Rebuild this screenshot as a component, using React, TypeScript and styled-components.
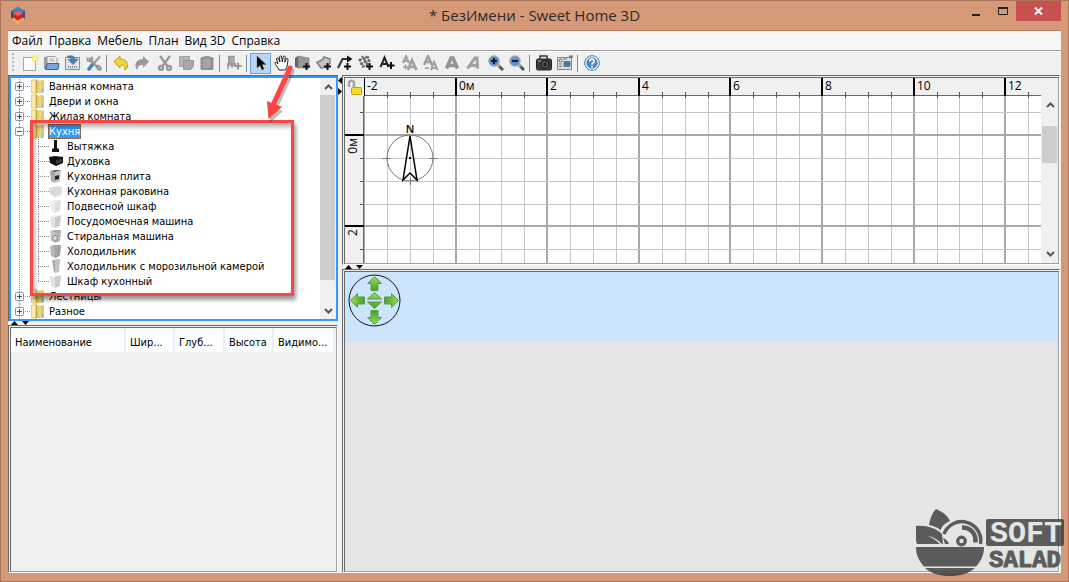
import React, { useLayoutEffect, useRef, useState } from 'react';
import styled, { createGlobalStyle } from 'styled-components';

const GlobalStyle = createGlobalStyle`
  *, *::before, *::after { box-sizing: border-box; }
  body { margin: 0; font-family: 'Open Sans', sans-serif; font-size: 12px; color: #000; }
  button { font: inherit; color: inherit; padding: 0; border: 0; background: none; }
  ul { list-style: none; margin: 0; padding: 0; }
`;

const LIST_FONT = "'DejaVu Sans Condensed', 'DejaVu Sans', sans-serif";

const dots = (dir: string) =>
  `repeating-linear-gradient(${dir}, #909090 0 1px, transparent 1px 2px)`;

/* ---------- window frame ---------- */

const Window = styled.div`
  position: relative;
  min-height: 100vh;
  display: flex;
  flex-direction: column;
  padding: 0 7px 8px;
  border: 1px solid #a8745a;
  background: #d69977;
  overflow: hidden;
`;

const TitleBar = styled.header`
  display: grid;
  grid-template-columns: 130px 1fr 130px;
  height: 29px;
`;

const AppIcon = styled.svg`
  margin: 6px 2px;
`;

const Title = styled.h1`
  margin: 0;
  font-size: 15px;
  line-height: 29px;
  font-weight: 400;
  text-align: center;
  color: #2b2b2b;
`;

const WindowButtons = styled.div`
  display: flex;
  justify-content: flex-end;
  align-items: flex-start;
`;

const WindowButton = styled.button<{ $close?: boolean }>`
  width: ${p => (p.$close ? 45 : 27)}px;
  height: 20px;
  background: ${p => (p.$close ? '#c75050' : 'transparent')};
  svg { display: block; margin: 0 auto; }
`;

const Client = styled.div`
  flex: 1;
  display: flex;
  flex-direction: column;
  border-top: 1px solid #b57f60;
  background: #f0f0f0;
`;

const MenuBar = styled.nav`
  display: flex;
  gap: 6px;
  height: 20px;
  padding-left: 4px;
  background: #f6f6f6;
  border-bottom: 1px solid #a0a0a0;
`;

const MenuItem = styled.button`
  line-height: 19px;
  white-space: nowrap;
`;

/* ---------- toolbar ---------- */

const Toolbar = styled.div`
  display: flex;
  align-items: center;
  height: 24px;
  padding: 0 0 1px 4px;
  border-top: 1px solid #fff;
`;

const Grip = styled.span`
  width: 2px;
  height: 20px;
  margin-right: 6px;
  background: repeating-linear-gradient(#b8b8b8 0 2px, transparent 2px 4px);
`;

const Group = styled.div`
  display: flex;
  & + & { margin-left: 2px; }
`;

const Separator = styled.span`
  width: 1px;
  height: 17px;
  margin: 0 3px 0 2px;
  background: #8a8a8a;
`;

const ToolButton = styled.button<{ $active?: boolean }>`
  display: grid;
  place-items: center;
  width: 21px;
  height: 21px;
  border: 1px solid ${p => (p.$active ? '#6ba6dc' : 'transparent')};
  background: ${p => (p.$active ? '#b9d7f3' : 'transparent')};
`;

/* ---------- panes ---------- */

const Main = styled.main`
  flex: 1;
  display: flex;
  padding-right: 1px;
`;

const Column = styled.div<{ $side?: boolean }>`
  display: flex;
  flex-direction: column;
  min-width: 0;
  flex: ${p => (p.$side ? '0 0 330px' : '1 1 0')};
`;

const Splitter = styled.div<{ $vertical?: boolean }>`
  flex: 0 0 4px;
  line-height: 0;
  overflow: hidden;
  padding: ${p => (p.$vertical ? '2px 0' : '0 3px')};
`;

const Pane = styled.section<{ $grow: number }>`
  flex: ${p => p.$grow} 1 0;
  min-height: 0;
  display: flex;
  padding: 1px 0 0 1px;
  border: 1px solid;
  border-color: #696969 #fff #fff #696969;
`;

const PaneBody = styled.div`
  flex: 1;
  min-width: 0;
  border: 1px solid;
  border-color: #696969 #a0a0a0 #a0a0a0 #696969;
`;

const TreePane = styled.section`
  flex: 247 1 0;
  min-height: 0;
  display: flex;
  border: 1px solid #696969;
  border-width: 1px 0 0 1px;
`;

const TreeFrame = styled.div`
  flex: 1;
  min-width: 0;
  display: flex;
  border: 2px solid #3399ff;
  background: #fff;
`;

const Tree = styled.ul`
  flex: 1;
  min-width: 0;
  padding: 1px 0 0 4px;
  overflow: hidden;
  font-family: ${LIST_FONT};
  font-size: 11px;
  line-height: 15px;
`;

const CategoryRow = styled.div`
  display: flex;
  align-items: center;
  height: 15px;
  background: ${dots('to bottom')} 4px 0 / 1px 15px no-repeat,
    ${dots('to right')} 8px 7px / 9px 1px no-repeat;
`;

const Toggle = styled.button`
  width: 9px;
  height: 9px;
  margin-right: 7px;
  svg { display: block; }
`;

const Folder = styled.svg`
  flex: none;
  margin-right: 4px;
`;

const Label = styled.span<{ $selected?: boolean }>`
  height: 15px;
  padding: 0 1px;
  white-space: nowrap;
  color: ${p => (p.$selected ? '#fff' : '#000')};
  background: ${p => (p.$selected ? '#3399ff' : 'transparent')};
  outline: ${p => (p.$selected ? '1px dotted #7a5a3a' : 'none')};
  outline-offset: -1px;
`;

const Items = styled.ul`
  background: ${dots('to bottom')} 4px 0 / 1px 100% no-repeat;
`;

const ItemRow = styled.li<{ $last?: boolean }>`
  display: flex;
  align-items: center;
  height: 15px;
  padding-left: 34px;
  background: ${dots('to bottom')} 23px 0 / 1px ${p => (p.$last ? 8 : 15)}px no-repeat,
    ${dots('to right')} 23px 7px / 11px 1px no-repeat;
  svg { flex: none; margin-right: 3px; }
`;

const ScrollBar = styled.div`
  display: flex;
  flex-direction: column;
  width: 16px;
  background: #f0f0f0;
`;

const ScrollArrow = styled.button`
  display: grid;
  place-items: center;
  height: 17px;
  flex: none;
`;

const ScrollTrack = styled.div`
  flex: 1;
  display: flex;
  flex-direction: column;
`;

const Thumb = styled.div<{ $size: number }>`
  flex: ${p => p.$size} 1 0;
  background: #cdcdcd;
  margin-right: 1px;
`;

const Spacer = styled.div<{ $grow: number }>`
  flex: ${p => p.$grow} 1 0;
`;

const FurnitureTable = styled.table`
  width: calc(100% - 1px);
  table-layout: fixed;
  border-collapse: separate;
  border-spacing: 0;
  font-family: ${LIST_FONT};
  font-size: 11px;
  background: #fcfdff;
`;

const HeadCell = styled.th<{ $width?: number }>`
  width: ${p => (p.$width ? `${p.$width}px` : 'auto')};
  height: 24px;
  padding: 4px 0 0 4px;
  font-weight: 400;
  text-align: left;
  white-space: nowrap;
  border-right: 2px solid #e9eff8;
`;

/* ---------- plan ---------- */

const PlanGrid = styled.div`
  display: grid;
  grid-template-columns: 19px 1fr 17px;
  grid-template-rows: 18px 1fr;
  height: 100%;
`;

const Corner = styled.button`
  display: grid;
  place-items: center;
`;

const ClipCell = styled.div<{ $paper?: boolean }>`
  display: grid;
  min-width: 0;
  min-height: 0;
  overflow: hidden;
  background: ${p => (p.$paper ? '#fff' : '#f0f0f0')};
  svg { display: block; width: 100%; height: 0; min-height: 100%; }
`;

const PlanScroll = styled.div`
  display: flex;
  justify-content: flex-end;
  background: #f0f0f0;
`;

const View3D = styled.div`
  height: 100%;
  padding: 2px 3px;
  background: linear-gradient(#cce4fc 70px, #e5e5e5 70px);
`;

/* ---------- overlays ---------- */

const Callout = styled.div`
  position: absolute;
  left: 29px;
  top: 119px;
  width: 264px;
  height: 176px;
  border: 3px solid #fb4646;
  box-shadow: 2px 4px 4px rgba(0, 0, 0, 0.4), inset 2px 4px 4px rgba(0, 0, 0, 0.3);
  pointer-events: none;
`;

const CalloutArrow = styled.svg`
  position: absolute;
  left: 259px;
  top: 59px;
  pointer-events: none;
`;

const Watermark = styled.svg`
  position: absolute;
  right: 0;
  bottom: 4px;
  pointer-events: none;
`;

/* ---------- icons ---------- */

const Plus = ({ c = '#111', x = 11.5, y = 11.5 }: { c?: string; x?: number; y?: number }) => (
  <path d={`M${x - 3.5} ${y}h7M${x} ${y - 3.5}v7`} stroke={c} strokeWidth="2" fill="none" />
);

const Lens = ({ plus }: { plus?: boolean }) => (
  <>
    <path d="M10 10l5 5" stroke="#555" strokeWidth="3" />
    <path d="M9.5 9.5l2 2" stroke="#bbb" strokeWidth="2" />
    <circle cx="6" cy="6" r="5" fill="#5b8fd0" stroke="#9aa3ad" strokeWidth="1.5" />
    <path d={plus ? 'M3 6h6M6 3v6' : 'M3 6h6'} stroke="#0a1f4a" strokeWidth="2" />
  </>
);

const icons: Record<string, React.ReactNode> = {
  new: (
    <>
      <path d="M.5 2.5h12v13H.5z" fill="#fcfcfc" stroke="#a5a5a5" />
      <circle cx="12" cy="3.5" r="3.500" fill="#f8ea5a" opacity=".8" />
      <circle cx="12" cy="3.5" r="1.500" fill="#fffbd0" />
    </>
  ),
  open: (
    <>
      <path d="M0 2h6l1 2v10H0z" fill="#9a9a9a" />
      <path d="M3 1.500h8l2 2V10H3z" fill="#f5f5f5" stroke="#999" />
      <path d="M5 4h5M5 6h6" stroke="#aaa" />
      <path d="M3.500 8.500h11.500l-1 6H1.500z" fill="#7ba5d8" stroke="#3465a4" />
    </>
  ),
  save: (
    <>
      <path d="M.5 2.500h14v12H.5z" fill="#e4e4e4" stroke="#8a8a8a" />
      <path d="M3 12h10" stroke="#8a8a8a" strokeWidth="2" strokeDasharray="1 1" />
      <path d="M2 1.500c5-2 8 0 8 3h3l-5 5-5-5h3c0-2-1-2-4-3z" fill="#4a82bd" stroke="#2d5f99" strokeWidth=".6" />
    </>
  ),
  prefs: (
    <>
      <path d="M3 3l9 10" stroke="#999" strokeWidth="2.5" />
      <path d="M1.500 2.500v3l3 1 2-2-1-3" fill="none" stroke="#999" strokeWidth="1.800" />
      <path d="M10 12l2 3h3v-3l-3-2z" fill="#aaa" stroke="#888" />
      <path d="M14 1.500L8 8" stroke="#999" strokeWidth="2" />
      <path d="M6 10l-3 4" stroke="#4f7fb8" strokeWidth="3.600" strokeLinecap="round" />
    </>
  ),
  undo: <path d="M1 6.500L7 1v3c5 0 8 3 7.500 7 0 2-1 3-3 4 1-3 0-5-4.500-5v3z" fill="#f4d43c" stroke="#c3a014" />,
  redo: <path d="M15 6.500L9 1v3C4 4 1 7 1.500 11c0 2 1 3 2 4 0-3 1-5 5.500-5v3z" fill="#9a9a9a" />,
  cut: (
    <g fill="none" stroke="#999" strokeWidth="2.400">
      <path d="M3 1l7.500 10M13 1L5.500 11" />
      <circle cx="4" cy="13" r="2" />
      <circle cx="12" cy="13" r="2" />
    </g>
  ),
  copy: (
    <>
      <path d="M1.500 1.500h10v10h-10z" fill="#b5b5b5" stroke="#a2a2a2" />
      <path d="M5.500 5.500h10v6l-3 3h-7z" fill="#a9a9a9" stroke="#979797" />
    </>
  ),
  paste: (
    <>
      <rect x="1.500" y="2" width="13" height="13" rx="1.500" fill="#909090" />
      <path d="M4 4h8v7l-2 2H4z" fill="#a4a4a4" />
      <path d="M5 1h6v3H5z" fill="#999" />
    </>
  ),
  addFurniture: (
    <>
      <path d="M2 1h5v7H2zM1 8h9v3H1z" fill="#a8a8a8" />
      <path d="M3 8V1.500h5V8M2 14.500V9h7v3M6 13V9" fill="none" stroke="#989898" strokeWidth="1.500" />
      <Plus c="#979797" x={12} y={11} />
    </>
  ),
  select: <path d="M4 1v12l3-2.500 2 4.500 2-1-2-4.500h4z" fill="#000" stroke="#666" strokeWidth=".5" />,
  pan: (
    <path
      d="M5 15c-1-3-4-5-4-7 0-1 2-1 3 1L2.500 4c0-1.500 2-1.500 2.200 0L5.800 7 5.600 2c0-1.500 2-1.500 2.100 0L8.300 7 9.200 2c.3-1.400 2-1.200 2 .2L10.800 7.300 12.200 4c.5-1.200 2-.8 1.800.5C13.500 8 13.500 12 11.500 15z"
      fill="#fff"
      stroke="#222"
    />
  ),
  wall: (
    <>
      <path d="M0 3l3-2v12l-3-1z" fill="#666" />
      <path d="M3 1l11 2v10L3 13z" fill="#989898" stroke="#777" strokeWidth=".6" />
      <Plus />
    </>
  ),
  room: (
    <>
      <path d="M1 7.500L6 5l2-3 6 2v4l-3 4-6 1z" fill="#c5c5c5" stroke="#808080" strokeWidth="1.500" />
      <Plus />
    </>
  ),
  polyline: (
    <>
      <path d="M1 13L5.500 4H12" fill="none" stroke="#333" strokeWidth="2" />
      <path d="M10 .5L15.500 4 10 7.500z" fill="#111" />
      <Plus x={10.500} />
    </>
  ),
  dimension: (
    <>
      <path d="M1 5l10-3M2 9l10-4M4 12l7-3M4 1l6 9M1 4l5 8M8 1l4 6" stroke="#666" strokeWidth="2" strokeDasharray="3 1" />
      <Plus />
    </>
  ),
  text: (
    <>
      <path d="M1.500 12L5.500 2.500 9.500 12M3 9h5" fill="none" stroke="#222" strokeWidth="2" />
      <Plus x={12} y={10.500} />
    </>
  ),
  bigger: (
    <g fill="none" stroke="#a0a0a0">
      <path d="M1 8l3-7 3 7M2 6h4" strokeWidth="2" />
      <path d="M6 15l4-10 4.500 10M7.500 12h5.500" strokeWidth="2.600" />
      <path d="M1 12h5M3.500 9.500v5" strokeWidth="1.600" />
    </g>
  ),
  smaller: (
    <g fill="none" stroke="#a0a0a0">
      <path d="M1 10l4-9 4 9M2.500 7H8" strokeWidth="2.600" />
      <path d="M8 15l3-8 3.500 8M9 13h4.500" strokeWidth="2" />
      <path d="M2 13h4" strokeWidth="1.600" />
    </g>
  ),
  bold: <path d="M2.500 13.500L7 3h2l4.500 10.500M4 10.500h8" fill="none" stroke="#959595" strokeWidth="3.600" />,
  italic: <path d="M2.500 13.500L10 3h2l.5 10.500M5 10.500h8" fill="none" stroke="#a0a0a0" strokeWidth="3" />,
  zoomIn: <Lens plus />,
  zoomOut: <Lens />,
  photo: (
    <>
      <path d="M4 4.500V1h7v3.500" fill="none" stroke="#333" strokeWidth="1.500" />
      <rect x=".5" y="4" width="15" height="11" rx="1.500" fill="#3d3d3d" stroke="#222" />
      <circle cx="9" cy="9.500" r="3.800" fill="#666" stroke="#111" />
      <circle cx="9" cy="9.500" r="2" fill="#222" />
      <path d="M2 6h3" stroke="#aaa" />
    </>
  ),
  video: (
    <>
      <path d="M.5 2.500h14v12H.5z" fill="#dedede" stroke="#858585" />
      <circle cx="3.500" cy="5.500" r="1.500" fill="#fff" stroke="#555" />
      <path d="M2 9h3M2 11.500h3M6 4h4" stroke="#777" />
      <path d="M7 6.500h6v5H7z" fill="#3f78bd" stroke="#777" />
      <path d="M12 1.500h4" stroke="#777" strokeWidth="2" />
    </>
  ),
  help: (
    <>
      <circle cx="8" cy="8" r="7.300" fill="#fff" stroke="#3f72b5" />
      <circle cx="8" cy="8" r="5.700" fill="#4f86c8" />
      <path d="M5.800 6.500c0-3 4.400-3 4.400-.5C10.200 7.800 8 7.500 8 9.800M8 11v1.500" fill="none" stroke="#fff" strokeWidth="1.700" />
    </>
  ),
};

const Tool = ({ name, label, active }: { name: string; label: string; active?: boolean }) => (
  <ToolButton $active={active} aria-label={label}>
    <svg width="16" height="16" viewBox="0 0 16 16">{icons[name]}</svg>
  </ToolButton>
);

type ToolDef = [string, string];
const toolGroups: (ToolDef[] | null)[] = [
  [['new', 'Новый'], ['open', 'Открыть'], ['save', 'Сохранить'], ['prefs', 'Настройки']],
  null,
  [['undo', 'Отменить'], ['redo', 'Повторить']],
  [['cut', 'Вырезать'], ['copy', 'Копировать'], ['paste', 'Вставить']],
  null,
  [['addFurniture', 'Добавить мебель']],
  null,
  [
    ['select', 'Выбор'], ['pan', 'Перемещение'], ['wall', 'Стены'], ['room', 'Комнаты'],
    ['polyline', 'Ломаная'], ['dimension', 'Размеры'], ['text', 'Текст'],
  ],
  [['bigger', 'Крупнее'], ['smaller', 'Мельче'], ['bold', 'Жирный'], ['italic', 'Курсив']],
  [['zoomIn', 'Приблизить'], ['zoomOut', 'Отдалить']],
  null,
  [['photo', 'Фото'], ['video', 'Видео']],
  null,
  [['help', 'Справка']],
];

const FolderIcon = () => (
  <Folder width="13" height="15" viewBox="0 0 13 15">
    <path d="M0 1l4-1 3 1v13l-3 1-4-1z" fill="#e9d272" />
    <path d="M1 2l3-1v13l-3-1z" fill="#f8ebad" />
    <path d="M6 2l6-1 1 1v11l-1 1H6z" fill="#e3cb66" />
    <path d="M8 3l2-1v11H8z" fill="#ecd98a" />
    <path d="M5.500 1v13" stroke="#c5a845" />
    <path d="M11.500 10v4" stroke="#7fb4dc" />
  </Folder>
);

const Box = ({ front, side, top, narrow }: { front: string; side: string; top: string; narrow?: boolean }) =>
  narrow ? (
    <>
      <path d="M4 1h7l-1 12-4 1z" fill={front} />
      <path d="M3 1l3 1v12l-1-1z" fill={side} />
      <path d="M3 1l7-1 1 1-5 1z" fill={top} />
    </>
  ) : (
    <>
      <path d="M1 2l5 1v11l-4-2z" fill={side} />
      <path d="M6 3l6-2-1 11-5 2z" fill={front} />
      <path d="M1 2l6-1 5 0-6 2z" fill={top} />
    </>
  );

const light = { front: '#cbcbcb', side: '#e2e2e2', top: '#f0f0f0' };

const items: [string, React.ReactNode][] = [
  ['Вытяжка', <path d="M5 1h3v8l2 1v3H3v-3l2-1z" fill="#151515" />],
  [
    'Духовка',
    <>
      <path d="M0 3l6-1 8 1v6l-7 3-6-3z" fill="#111" />
      <path d="M7 6l6-1v3l-6 2z" fill="#3c3c3c" />
    </>,
  ],
  [
    'Кухонная плита',
    <>
      <Box front="#c4c4c4" side="#aaa" top="#555" />
      <path d="M6 7l4-1v4l-4 1z" fill="#222" />
    </>,
  ],
  ['Кухонная раковина', <path d="M0 4l8-2 5 1v7l-7 3-5-3z" fill="#d9d9d9" stroke="#ececec" />],
  ['Подвесной шкаф', <Box front="#dedede" side="#ededed" top="#ededed" />],
  ['Посудомоечная машина', <Box {...light} />],
  [
    'Стиральная машина',
    <>
      <Box front="#b4b4b4" side="#c8c8c8" top="#999" />
      <circle cx="6" cy="9" r="2.500" fill="#ddd" stroke="#888" />
    </>,
  ],
  ['Холодильник', <Box front="#a0a0a0" side="#b8b8b8" top="#999" />],
  ['Холодильник с морозильной камерой', <Box narrow front="#c4c4c4" side="#aaa" top="#bbb" />],
  ['Шкаф кухонный', <Box {...light} />],
];

const Category = ({ name, open, children }: { name: string; open?: boolean; children?: React.ReactNode }) => (
  <li>
    <CategoryRow>
      <Toggle aria-label={name} aria-expanded={!!open}>
        <svg width="9" height="9">
          <rect x=".5" y=".5" width="8" height="8" rx="1" fill="#f8f8f8" stroke="#919191" />
          <path d={open ? 'M2 4.500h5' : 'M2 4.500h5M4.500 2v5'} stroke="#33508c" />
        </svg>
      </Toggle>
      <FolderIcon />
      <Label $selected={open}>{name}</Label>
    </CategoryRow>
    {children}
  </li>
);

const Chevron = ({ down }: { down?: boolean }) => (
  <svg width="9" height="6">
    <path d={down ? 'M1 1l3.500 3.500L8 1' : 'M1 5l3.500-3.500L8 5'} fill="none" stroke="#555" strokeWidth="2" />
  </svg>
);

const Scroll = ({ before, size, after }: { before: number; size: number; after: number }) => (
  <ScrollBar>
    <ScrollArrow aria-label="Вверх"><Chevron /></ScrollArrow>
    <ScrollTrack>
      <Spacer $grow={before} />
      <Thumb $size={size} />
      <Spacer $grow={after} />
    </ScrollTrack>
    <ScrollArrow aria-label="Вниз"><Chevron down /></ScrollArrow>
  </ScrollBar>
);

const columns: [string, number?][] = [
  ['Наименование', 115], ['Шир...', 49], ['Глуб...', 50], ['Высота', 49], ['Видимо...'],
];

/* Half a metre on the plan, in pixels. */
const CELL = 22.9;
const LABEL_ROOM = 20;
const marks = (length: number) => Array.from({ length: Math.ceil(length / CELL) + 1 }, (_, i) => i);
const rowY = (i: number) => Math.round(i * CELL - 7);

const TopRuler = ({ width }: { width: number }) => (
  <svg>
    <path d={`M-1 17.500h${width + 2}`} stroke="#696969" />
    {marks(width).map(i => {
      const x = Math.round(i * CELL);
      const major = i % 4 === 0;
      return (
        <g key={i}>
          <path d={major ? `M${x} 0v18` : `M${x + 0.5} 14v4`} stroke={major ? '#000' : '#555'} strokeWidth={major ? 2 : 1} />
          {major && x + LABEL_ROOM < width && (
            <text x={x + 3} y="12" fontSize="12">{i === 4 ? '0м' : i / 2 - 2}</text>
          )}
        </g>
      );
    })}
  </svg>
);

const SideRuler = ({ height }: { height: number }) => (
  <svg>
    <path d={`M18.500 0v${height}`} stroke="#696969" />
    {marks(height).map(i => {
      const y = rowY(i);
      const major = i % 4 === 2;
      return (
        <g key={i}>
          <path d={major ? `M0 ${y}h19` : `M15 ${y + 0.5}h4`} stroke={major ? '#000' : '#555'} strokeWidth={major ? 2 : 1} />
          {major && y + LABEL_ROOM < height && (
            <text fontSize="12" textAnchor="end" transform={`translate(12 ${y + 3}) rotate(-90)`}>
              {i === 2 ? '0м' : (i - 2) / 2}
            </text>
          )}
        </g>
      );
    })}
  </svg>
);

const PlanCanvas = ({ width, height }: { width: number; height: number }) => (
  <svg>
    {marks(width).map(i => {
      const x = Math.round(i * CELL);
      return i % 4 ? (
        <g key={i}>
          <path d={`M${x + 0.5} 0v${height}`} stroke="#c6c6c6" />
          <path d={`M${x + 0.5} 0v2`} stroke="#555" />
        </g>
      ) : (
        <path key={i} d={`M${x} 0v${height}`} stroke="#a8a8a8" strokeWidth="2" />
      );
    })}
    {marks(height).map(i => {
      const y = rowY(i);
      return i % 4 === 2 ? (
        <path key={i} d={`M0 ${y}h${width}`} stroke="#a8a8a8" strokeWidth="2" />
      ) : (
        <path key={i} d={`M0 ${y + 0.5}h${width}`} stroke="#c6c6c6" />
      );
    })}
    <g fill="none" stroke="#777">
      <circle cx="46" cy="62" r="23" />
      <path d="M18.500 62.500h8M65.500 62.500h8M46.500 82v7" />
      <path d="M46 40l-7 44 7-7 7 7z" stroke="#000" strokeWidth="1.500" />
      <path d="M45 62h2" stroke="#000" strokeWidth="2" />
    </g>
    <text x="46" y="37" fontSize="11" fontWeight="600" textAnchor="middle">N</text>
  </svg>
);

const PlanView = () => {
  const ref = useRef<HTMLDivElement>(null);
  const [size, setSize] = useState({ width: 0, height: 0 });
  useLayoutEffect(() => {
    const el = ref.current!;
    const measure = () => setSize({ width: el.clientWidth, height: el.clientHeight });
    measure();
    const observer = new ResizeObserver(measure);
    observer.observe(el);
    return () => observer.disconnect();
  }, []);
  return (
    <PlanGrid>
      <Corner aria-label="Заблокировать план">
        <svg width="15" height="16" viewBox="0 0 15 16">
          <path d="M2 8V4c0-3 5-3 5 0v4" fill="none" stroke="#a5a5a5" strokeWidth="2.500" />
          <rect x="4.500" y="8.500" width="10" height="7" rx="1" fill="#f5d923" stroke="#c3a20a" />
        </svg>
      </Corner>
      <ClipCell><TopRuler width={size.width} /></ClipCell>
      <ClipCell />
      <ClipCell><SideRuler height={size.height} /></ClipCell>
      <ClipCell $paper ref={ref}><PlanCanvas {...size} /></ClipCell>
      <PlanScroll><Scroll before={13} size={37} after={82} /></PlanScroll>
    </PlanGrid>
  );
};

const ARROW = 'M0-24l7 7h-3.500v7h-7v-7h-3.500z';

const Navigator = () => (
  <svg width="53" height="53" viewBox="-26.500 -26.500 53 53">
    <defs>
      <linearGradient id="leaf" x1="0" y1="0" x2="0" y2="1">
        <stop offset="0" stopColor="#9bd95f" />
        <stop offset="1" stopColor="#4aa028" />
      </linearGradient>
    </defs>
    <circle r="25.500" fill="none" stroke="#111" />
    <g fill="url(#leaf)" stroke="#5d9a48">
      {[0, 90, 180, 270].map(a => <path key={a} d={ARROW} transform={`rotate(${a})`} />)}
      <path d="M0-8l7 6.500H-7zM0 8l7-6.500H-7z" />
    </g>
  </svg>
);

const App: React.FC = () => (
  <>
    <GlobalStyle />
    <Window>
      <TitleBar>
        <AppIcon width="16" height="17" viewBox="0 0 16 17">
          <path d="M8 0l7 4v8l-7 4-7-4V4z" fill="#20558a" />
          <path d="M8 0l7 4-3 2-4-2-4 2-3-2z" fill="#3189c8" />
          <path d="M1 12l3-2 4 3 4-3 3 2-7 5z" fill="#f0ae62" />
          <path d="M8 3.500l5 3v4L8 13.500l-5-3v-4z" fill="#d81e24" />
          <path d="M8 3.500l5 3-5 2.500-5-2.500z" fill="#f65a50" />
        </AppIcon>
        <Title>* БезИмени - Sweet Home 3D</Title>
        <WindowButtons>
          <WindowButton aria-label="Свернуть">
            <svg width="10" height="12"><path d="M1 10h8" stroke="#222" strokeWidth="2" /></svg>
          </WindowButton>
          <WindowButton aria-label="Развернуть">
            <svg width="10" height="10"><path d="M.5 2v6.500h9V2" fill="none" stroke="#222" /><path d="M0 2h10" stroke="#222" strokeWidth="2" /></svg>
          </WindowButton>
          <WindowButton $close aria-label="Закрыть">
            <svg width="9" height="8"><path d="M1 .5l7 7M8 .5l-7 7" stroke="#fff" strokeWidth="2" /></svg>
          </WindowButton>
        </WindowButtons>
      </TitleBar>
      <Client>
        <MenuBar>
          {['Файл', 'Правка', 'Мебель', 'План', 'Вид 3D', 'Справка'].map(m => <MenuItem key={m}>{m}</MenuItem>)}
        </MenuBar>
        <Toolbar>
          <Grip />
          {toolGroups.map((g, i) =>
            g ? (
              <Group key={i}>
                {g.map(([n, l]) => <Tool key={n} name={n} label={l} active={n === 'select'} />)}
              </Group>
            ) : (
              <Separator key={i} />
            ),
          )}
        </Toolbar>
        <Main>
          <Column $side>
            <TreePane>
              <TreeFrame>
                <Tree>
                  <Category name="Ванная комната" />
                  <Category name="Двери и окна" />
                  <Category name="Жилая комната" />
                  <Category name="Кухня" open>
                    <Items>
                      {items.map(([name, art], i) => (
                        <ItemRow key={name} $last={i === items.length - 1}>
                          <svg width="14" height="15">{art}</svg>
                          <Label>{name}</Label>
                        </ItemRow>
                      ))}
                    </Items>
                  </Category>
                  <Category name="Лестницы" />
                  <Category name="Разное" />
                </Tree>
                <Scroll before={0} size={186} after={22} />
              </TreeFrame>
            </TreePane>
            <Splitter>
              <svg width="20" height="4"><path d="M0 4l3.500-4L7 4zM11 0h7l-3.500 4z" /></svg>
            </Splitter>
            <Pane $grow={247}>
              <PaneBody>
                <FurnitureTable>
                  <thead>
                    <tr>{columns.map(([c, w]) => <HeadCell key={c} $width={w} scope="col">{c}</HeadCell>)}</tr>
                  </thead>
                </FurnitureTable>
              </PaneBody>
            </Pane>
          </Column>
          <Splitter $vertical>
            <svg width="4" height="20"><path d="M4 0v7L0 3.500zM0 11v7l4-3.500z" /></svg>
          </Splitter>
          <Column>
            <Pane $grow={189}>
              <PaneBody>
                <PlanView />
              </PaneBody>
            </Pane>
            <Splitter>
              <svg width="20" height="4"><path d="M0 4l3.500-4L7 4zM11 0h7l-3.500 4z" /></svg>
            </Splitter>
            <Pane $grow={305}>
              <PaneBody>
                <View3D><Navigator /></View3D>
              </PaneBody>
            </Pane>
          </Column>
        </Main>
      </Client>
      <Callout />
      <CalloutArrow width="40" height="64">
        <g transform="translate(2 3)" opacity=".25">
          <path d="M30 8L14 43" stroke="#000" strokeWidth="5" strokeLinecap="round" />
          <path d="M7 42l14 6-13 12z" />
        </g>
        <path d="M30 8L14 43" stroke="#fb4646" strokeWidth="5" strokeLinecap="round" />
        <path d="M7 41l15 6-13.500 12z" fill="#fb4646" />
      </CalloutArrow>
      <Watermark width="152" height="68" viewBox="0 0 152 68">
        <g fill="#303030" opacity=".76">
          <path d="M0 38h68c0 8-3 14-8 19.500H8C3 52 0 46 0 38z" />
          <path d="M9 59h50c-7 6-15 8-25 8s-18-2-25-8z" />
          <path d="M0 17c10-1 20 2 26 8l1 10h-1c-4-4-8-7-14-8 6 3 9 5 12 8H1C-1 29-1 23 0 17z" />
          <path d="M27 29c3 1 5 3 6 6h-4z" />
          <path d="M13 16C14 10 16 4 20 0c7 3 12 7 14 12-5 2-8 5-9.500 9-4-3-7-4-11.500-5z" />
          <g fill="none" stroke="#303030">
            <path d="M28 25a19 19 0 0 1 36.500 10" strokeWidth="3.500" />
            <path d="M46 18.500c9 0 14 6 13.500 15" strokeWidth="4.500" />
            <circle cx="45.500" cy="32" r="3.800" strokeWidth="3.200" />
          </g>
          <rect x="70" y="10" width="78" height="27" rx="2" />
        </g>
        <text x="74" y="33" fontFamily="'Liberation Mono', monospace" fontWeight="700" fontSize="30" fill="#e5e5e5">SOFT</text>
        <text x="73" y="58" fontFamily="'Liberation Mono', monospace" fontWeight="700" fontSize="24" fill="#5c5c5c" stroke="#5c5c5c">SALAD</text>
      </Watermark>
    </Window>
  </>
);

export default App;
